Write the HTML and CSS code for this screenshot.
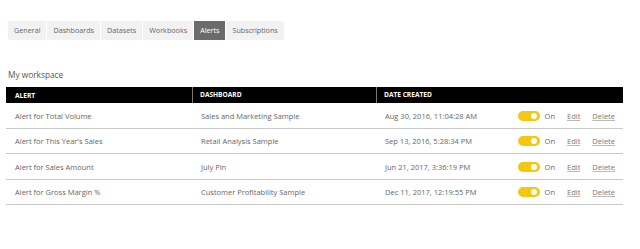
FILE: index.html
```html
<!DOCTYPE html>
<html>
<head>
<link rel="stylesheet" href="styles.css">
</head>
<body>

<div class="page">
  <div class="tabs">
    <span class="tab">General</span>
    <span class="tab">Dashboards</span>
    <span class="tab">Datasets</span>
    <span class="tab">Workbooks</span>
    <span class="tab active">Alerts</span>
    <span class="tab">Subscriptions</span>
  </div>

  <div class="workspace">My workspace</div>

  <div class="alerts">
    <div class="row head">
      <div class="cell">ALERT</div>
      <div class="cell">DASHBOARD</div>
      <div class="cell">DATE CREATED</div>
      <div class="cell"></div>
    </div>

    <div class="row">
      <div class="cell">Alert for Total Volume</div>
      <div class="cell">Sales and Marketing Sample</div>
      <div class="cell">Aug 30, 2016, 11:04:28 AM</div>
      <div class="cell actions">
        <span class="toggle"><span class="knob"></span></span>
        <span class="state">On</span>
        <a class="link">Edit</a>
        <a class="link">Delete</a>
      </div>
    </div>

    <div class="row">
      <div class="cell">Alert for This Year's Sales</div>
      <div class="cell">Retail Analysis Sample</div>
      <div class="cell">Sep 13, 2016, 5:28:34 PM</div>
      <div class="cell actions">
        <span class="toggle"><span class="knob"></span></span>
        <span class="state">On</span>
        <a class="link">Edit</a>
        <a class="link">Delete</a>
      </div>
    </div>

    <div class="row">
      <div class="cell">Alert for Sales Amount</div>
      <div class="cell">July Pin</div>
      <div class="cell">Jun 21, 2017, 3:36:19 PM</div>
      <div class="cell actions">
        <span class="toggle"><span class="knob"></span></span>
        <span class="state">On</span>
        <a class="link">Edit</a>
        <a class="link">Delete</a>
      </div>
    </div>

    <div class="row">
      <div class="cell">Alert for Gross Margin %</div>
      <div class="cell">Customer Profitability Sample</div>
      <div class="cell">Dec 11, 2017, 12:19:55 PM</div>
      <div class="cell actions">
        <span class="toggle"><span class="knob"></span></span>
        <span class="state">On</span>
        <a class="link">Edit</a>
        <a class="link">Delete</a>
      </div>
    </div>
  </div>
</div>

</body>
</html>
```

FILE: styles.css
```css
body {
  margin: 0;
  background: #fff;
  font-family: "Open Sans", sans-serif;
  color: #666;
}

.page {
  padding: 21px 17px 0 6px;
}

.tabs {
  display: flex;
  gap: 1px;
  margin-left: 2px;
}

.tab {
  background-color: #f2f2f2;
  color: #666;
  font-size: 7.2px;
  height: 19px;
  line-height: 19px;
  padding: 0 6px;
}

.tab.active {
  background-color: #6b6b6b;
  color: #fff;
}

.workspace {
  margin-top: 29px;
  margin-left: 2px;
  font-size: 8.3px;
  color: #555;
  height: 18px;
}

.row {
  display: grid;
  grid-template-columns: 186px 184px 1fr auto;
  box-sizing: border-box;
  height: 25.5px;
  padding-top: 1px;
  border-bottom: 1px solid #c8c8c8;
  align-items: center;
  font-size: 7.5px;
}

.row.head {
  height: 16px;
  padding-top: 0;
  background-color: #000;
  color: #fff;
  font-weight: bold;
  font-size: 6.6px;
  border-bottom: none;
}

.row .cell {
  padding-left: 9px;
}

.row.head .cell + .cell {
  border-left: 1px solid #777;
  height: 16px;
  line-height: 16px;
  padding-left: 7px;
}

.row.head .cell:last-child {
  border-left: none;
}

.actions {
  display: flex;
  align-items: center;
  padding-right: 8px;
}

/* the on/off switch */
.toggle {
  width: 22px;
  height: 10px;
  border-radius: 5px;
  background-color: #f2c811;
  position: relative;
  margin-right: 5px;
}

.knob {
  position: absolute;
  right: 3px;
  top: 2px;
  width: 6px;
  height: 6px;
  border-radius: 50%;
  background-color: #fff;
}

.state {
  margin-right: 12px;
}

.link {
  color: #777;
  text-decoration: underline;
  text-decoration-color: #bbb;
  margin-right: 12px;
}

.link:last-child {
  margin-right: 0;
}
```
